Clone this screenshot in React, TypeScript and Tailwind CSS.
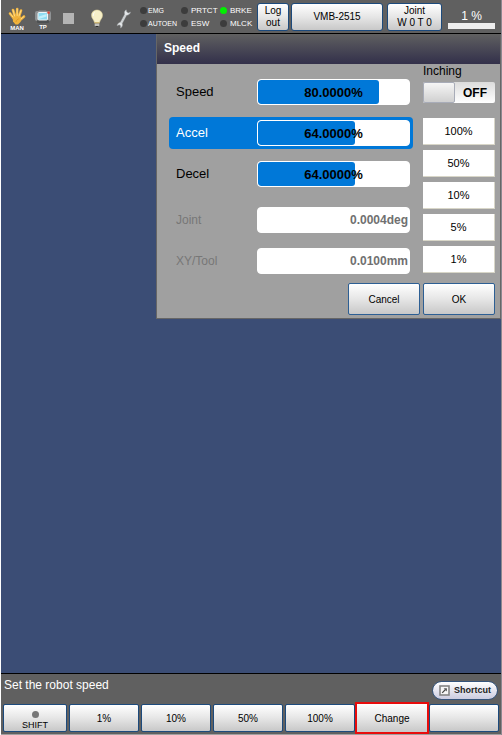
import React, { useState } from "react";

interface ParamRowProps {
  id: string;
  label: string;
  value: string;
  percent?: number;
  selected?: boolean;
}

const ParamRow: React.FC<ParamRowProps> = ({
  id,
  label,
  value,
  percent,
  selected,
}) => {
  const hasFill = percent !== undefined;
  const rowClasses = selected
    ? "flex items-center h-8 pl-[7px] pr-[3px] rounded-[4px] bg-[#0078d8] text-white"
    : hasFill
    ? "flex items-center h-8 pl-[7px] pr-[3px] text-black"
    : "flex items-center h-8 pl-[7px] pr-[3px] text-[#777777]";

  return (
    <div className={rowClasses}>
      <label
        htmlFor={id}
        className={hasFill ? "flex-1 text-[13px]" : "flex-1 text-[12px]"}
      >
        {label}
      </label>
      <div className="relative w-[153px] h-[26px] rounded-[4px] bg-white border border-white overflow-hidden">
        {hasFill && (
          <div
            className="absolute inset-y-0 left-0 rounded-[3px] bg-[#0078d8]"
            style={{ width: `${percent}%` }}
          />
        )}
        <input
          id={id}
          readOnly
          defaultValue={value}
          className={
            hasFill
              ? "relative block w-full h-full bg-transparent text-center text-[13px] font-bold text-black outline-none"
              : "relative block w-full h-full pr-px bg-transparent text-right text-[12px] font-bold text-[#707070] outline-none"
          }
        />
      </div>
    </div>
  );
};

const Lamp = ({
  label,
  on,
  small,
}: {
  label: string;
  on?: boolean;
  small?: boolean;
}) => (
  <div
    className={
      small
        ? "flex items-center gap-px h-[13px] text-[7px]"
        : "flex items-center gap-[3px] h-[13px] text-[8px]"
    }
  >
    <span
      className={
        on
          ? "w-[7px] h-[7px] rounded-full bg-[#00f000]"
          : "w-[7px] h-[7px] rounded-full bg-[#3c3c3c]"
      }
    />
    <span className="leading-none whitespace-nowrap">{label}</span>
  </div>
);

const HandIcon = () => (
  <svg width="18" height="18" viewBox="0 0 18 18">
    <path
      d="M5.500 11 2 6.500M7 9.500 5 3M9 9l.2-7M11 9.500 13 3.500M12 13l4-3.500"
      fill="none"
      stroke="#f0b23c"
      strokeWidth="2.600"
      strokeLinecap="round"
    />
    <path
      d="M4.500 9 12 8.500l1.500 3-1 3.500-2.500 2.500H7.500L5 14.500z"
      fill="#f0b23c"
    />
    <path
      d="M2 6.300 5 10M5 3l1.600 6M9.200 2v6.500M13 3.500 11 9M15.800 9.600 13 12"
      fill="none"
      stroke="#ffdc86"
      strokeWidth="1"
      strokeLinecap="round"
    />
    <path d="M8 15c.3-2 1.600-3 3.300-3.200" stroke="#d99424" strokeWidth=".8" fill="none" />
  </svg>
);

const PendantIcon = () => (
  <svg width="16" height="13" viewBox="0 0 16 13">
    <path d="M4 0h7l1 2H3z" fill="#77797b" />
    <rect x="0" y="1" width="16" height="10" rx="2" fill="#8f9294" />
    <rect x="2" y="10" width="12" height="3" rx="1" fill="#4d5052" />
    <rect x="3" y="2.500" width="9.500" height="7.500" rx="1" fill="#8fdcf2" stroke="#f0f4f5" />
    <path d="M4 6.500 11.500 4v2.500L4 9z" fill="#c2effa" />
    <rect x="12.500" y="1.500" width="2.200" height="2.200" fill="#e04030" />
  </svg>
);

const BulbIcon = () => (
  <svg width="14" height="19" viewBox="0 0 14 19">
    <path
      d="M7 1C3.600 1 1.500 3.400 1.500 6.400c0 2.800 2.500 4.200 3 7.100h5c.5-2.900 3-4.300 3-7.100C12.500 3.400 10.400 1 7 1z"
      fill="#f6efc8"
      stroke="#d8cc98"
      strokeWidth=".6"
    />
    <path d="M4.500 3.500c-1 .8-1.300 2-1.100 3.200" stroke="#fff" fill="none" />
    <path d="M4.500 13.500h5v1h-5z" fill="#d8b050" />
    <path d="M4.700 14.500h4.600v2.400L8 18.300H6l-1.300-1.400z" fill="#c0c0bc" />
    <path d="M5 16.900h4L8 18.300H6z" fill="#2e2e2e" />
  </svg>
);

const WrenchIcon = () => (
  <svg width="16" height="20" viewBox="0 0 16 20">
    <path
      d="M10.200.8C8.600 1.700 8 3.500 8.700 5.200L4.400 13.300C2.600 13.500 1.200 15 1.200 16.800l1.900-1.100 1.500 1-.1 2.300c1.700-.9 2.500-2.700 1.700-4.500l4.400-8.200c2 0 3.600-1.400 3.900-3.300l-2.100 1-1.600-1z"
      fill="#e4e7e9"
      stroke="#9a9ea0"
      strokeWidth=".5"
    />
    <path d="M9.500 6 5.400 13.800" stroke="#b4b8ba" strokeWidth=".6" />
  </svg>
);

const ShortcutIcon = () => (
  <svg width="11" height="11" viewBox="0 0 11 11">
    <rect x="1" y="1" width="9" height="9" fill="#f6f6f6" stroke="#858585" strokeWidth="1.600" />
    <path d="M3.200 7.800 6.500 4.500" stroke="#444" strokeWidth="1.200" />
    <path d="M4.700 3.200h3.200v3.200z" fill="#555" />
  </svg>
);

const topButton =
  "h-7 rounded-[3px] border border-[#1c4a7c] bg-linear-to-b from-white via-[#e6e6e6] to-[#c8c8c8] text-[10px] leading-[12px] text-black";

const presets = ["100%", "50%", "10%", "5%", "1%"];
const functionKeys = ["1%", "10%", "50%", "100%", "Change", ""];

const App = () => {
  const [inching, setInching] = useState(false);

  return (
    <div className="flex flex-col min-h-screen border-l border-white border-r border-r-[#8c8890] bg-[#3b4d75] font-['Liberation_Sans',Arial,sans-serif]">
      <header className="flex items-center h-[34px] pl-2 pr-[6px] border-b border-black bg-[#606060] text-white">
        <div className="flex items-center w-[131px]">
          <div className="flex flex-col items-center w-4 pt-1">
            <HandIcon />
            <span className="text-[6px] leading-[6px] font-bold">MAN</span>
          </div>
          <div className="flex flex-col items-center w-4 ml-[10px] pt-2">
            <PendantIcon />
            <span className="text-[6px] leading-[8px] font-bold">TP</span>
          </div>
          <div className="w-[11px] h-[11px] mt-1 ml-3 bg-[#b4b4b4]" />
          <div className="mt-1 ml-4">
            <BulbIcon />
          </div>
          <div className="mt-1 ml-3">
            <WrenchIcon />
          </div>
        </div>
        <div className="grid grid-cols-[41px_39px_37px] flex-none pt-px">
          <Lamp label="EMG" small />
          <Lamp label="PRTCT" />
          <Lamp label="BRKE" on />
          <Lamp label="AUTOEN" small />
          <Lamp label="ESW" />
          <Lamp label="MLCK" />
        </div>
        <button className={`${topButton} w-8 flex-none`}>
          Log
          <br />
          out
        </button>
        <button className={`${topButton} flex-1 ml-[2px]`}>VMB-2515</button>
        <button className={`${topButton} w-[55px] ml-1`}>
          Joint
          <br />W 0 T 0
        </button>
        <div className="w-[47px] ml-[6px] pt-1 text-center text-[12px] leading-[14px]">
          1 %
          <div className="h-[6px] bg-[#eeeeee]" />
        </div>
      </header>

      <main className="flex-1">
        <section className="w-[345px] ml-auto border border-t-0 border-[#666666] bg-[#a0a0a0]">
          <h1 className="h-[30px] pl-[7px] bg-linear-to-b from-[#606060] to-[#33304a] text-[12px] leading-[28px] font-bold text-white">
            Speed
          </h1>
          <div className="flex justify-between pl-3 pr-[5px]">
            <div className="flex flex-col gap-[9px] w-[244px] pt-3">
              <ParamRow id="speed" label="Speed" value="80.0000%" percent={80} />
              <ParamRow
                id="accel"
                label="Accel"
                value="64.0000%"
                percent={64}
                selected
              />
              <ParamRow id="decel" label="Decel" value="64.0000%" percent={64} />
              <div className="flex flex-col gap-[9px] pt-[5px]">
                <ParamRow id="joint" label="Joint" value="0.0004deg" />
                <ParamRow id="tool" label="XY/Tool" value="0.0100mm" />
              </div>
            </div>
            <div className="w-[72px] text-black">
              <div id="inching-label" className="text-[12px] leading-[14px]">
                Inching
              </div>
              <button
                role="switch"
                aria-checked={inching}
                aria-labelledby="inching-label"
                onClick={() => setInching(!inching)}
                className="flex items-center w-full h-[21px] mt-1 rounded-[2px] bg-linear-to-b from-[#dcdcdc] to-white text-[12px] font-bold"
              >
                <span className="w-8 h-full rounded-[2px] border border-[#a8acb8] bg-linear-to-b from-[#f6f6f6] to-[#d0d0d0]" />
                <span className="flex-1 text-center">
                  {inching ? "ON" : "OFF"}
                </span>
              </button>
              <div className="flex flex-col gap-[5px] mt-[15px]">
                {presets.map((preset) => (
                  <button
                    key={preset}
                    className="h-[27px] border-r border-b border-[#d8d6c8] bg-white text-[11px]"
                  >
                    {preset}
                  </button>
                ))}
              </div>
            </div>
          </div>
          <div className="flex justify-end gap-[3px] pt-[6px] pr-[5px] pb-[3px]">
            {["Cancel", "OK"].map((action) => (
              <button
                key={action}
                className="w-[72px] h-8 rounded-[2px] border border-[#2d5f94] bg-linear-to-b from-white via-[#e6e6e6] to-[#c8c8c8] text-[10px] text-black"
              >
                {action}
              </button>
            ))}
          </div>
        </section>
      </main>

      <footer className="border-t border-black bg-[#606060]">
        <div className="flex justify-between h-7 pl-[3px] pr-[3px] text-white">
          <p className="text-[12px] leading-[23px]">Set the robot speed</p>
          <button className="flex items-center justify-center gap-1 w-[66px] h-[19px] mt-[7px] rounded-full border border-[#35547c] bg-linear-to-b from-white to-[#cccce0] text-[9px] font-bold text-[#222222]">
            <ShortcutIcon />
            Shortcut
          </button>
        </div>
        <div className="grid grid-cols-[64px_repeat(6,1fr)] gap-x-[2px] px-[2px] pt-[2px] pb-[2px] border-b border-[#a0a0a0]">
          <button className="flex flex-col items-center justify-center gap-[2px] h-7 rounded-[2px] border border-[#1c4a7c] bg-linear-to-b from-white via-[#e6e6e6] to-[#c8c8c8] text-[9px] leading-[10px] text-black">
            <span className="w-[7px] h-[7px] mt-1 rounded-full bg-[#777777]" />
            SHIFT
          </button>
          {functionKeys.map((key) => (
            <button
              key={key}
              aria-label={key || "Unassigned"}
              className={
                key === "Change"
                  ? "h-7 bg-linear-to-b from-white via-[#e6e6e6] to-[#c8c8c8] text-[10px] text-black outline-2 outline-[#e80c0c]"
                  : "h-7 rounded-[2px] border border-[#1c4a7c] bg-linear-to-b from-white via-[#e6e6e6] to-[#c8c8c8] text-[10px] text-black"
              }
            >
              {key}
            </button>
          ))}
        </div>
      </footer>
    </div>
  );
};

export default App;
